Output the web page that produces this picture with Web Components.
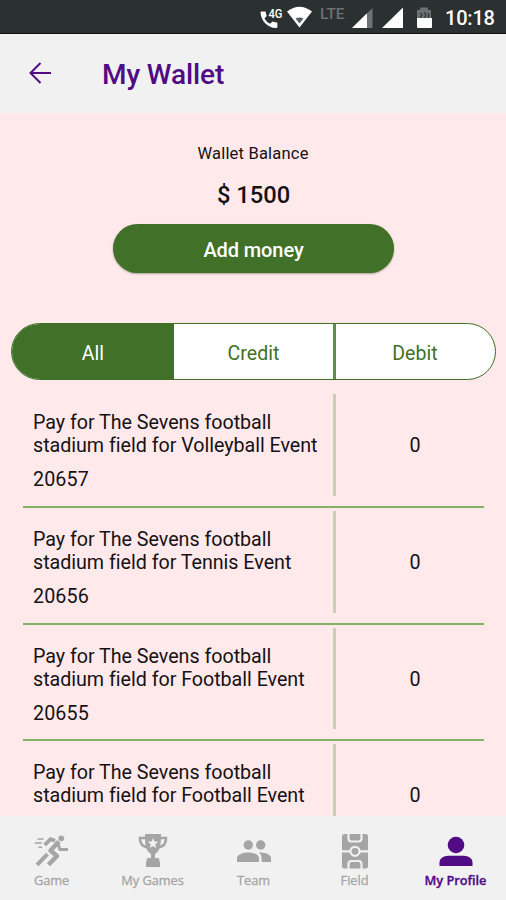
<!DOCTYPE html>
<html lang="en">
<head>
<meta charset="utf-8">
<title>My Wallet</title>
<style>
  html, body {
    margin: 0;
    height: 100%;
    overflow: hidden;
  }

  body {
    font-family: Roboto, sans-serif;
    --green: #417028;
    --purple: #500b85;
    --pink: #ffe9eb;
    --bar: #f1f1f1;
    --grey: #a5a5a5;
  }
</style>
</head>
<body>
<wallet-app></wallet-app>

<script>
function define(name, html, setup) {
  const template = document.createElement('template');
  template.innerHTML = html;
  customElements.define(name, class extends HTMLElement {
    constructor() {
      super();
      this.attachShadow({ mode: 'open' });
      this.shadowRoot.appendChild(template.content.cloneNode(true));
    }

    connectedCallback() {
      if (setup) setup(this, this.shadowRoot);
    }
  });
}

define('status-bar', `
  <style>
    :host {
      display: flex;
      align-items: flex-start;
      justify-content: flex-end;
      box-sizing: border-box;
      height: 34px;
      padding-right: 11px;
      background: #2b3031;
      border-bottom: 1px solid #111;
      color: #fff;
    }
    svg { display: block; flex: none; }
    .lte {
      width: 25px;
      margin: 5px 7px 0 8px;
      font-size: 15.500px;
      line-height: 18px;
      font-weight: 500;
      letter-spacing: -0.1px;
      color: #6c7172;
    }
    .time {
      width: 50px;
      margin-left: 13px;
      font-size: 20px;
      line-height: 36px;
      font-weight: 500;
      letter-spacing: -0.2px;
      white-space: nowrap;
    }
  </style>
  <svg width="27" height="34" viewBox="0 0 27 34">
    <path fill="#fff" d="M1.500 11.500h4l1.200 4.500-2.200 2.200c1.300 2.600 3 4.200 5.600 5.600l2.300-2.200 5 1.200v3.600c0 1-.6 1.600-1.600 1.600C8 28 1 21 .5 12.500c0-.6.400-1 1-1z"/>
    <text x="8.500" y="18" font-size="12.500" font-weight="500" fill="#fff" textLength="14" lengthAdjust="spacingAndGlyphs">4G</text>
  </svg>
  <svg width="25" height="34" viewBox="0 0 25 34">
    <path fill="#fff" d="M0 11.500Q12.500 2 25 11.500L12.500 27.500z"/>
    <path fill="#5b5f60" d="M8.500 18.500q4-2 8 0l-4 5z"/>
  </svg>
  <div class="lte">LTE</div>
  <svg width="21" height="34" viewBox="0 0 21 34">
    <path fill="#6c7172" d="M0 28L20.500 8v20z"/>
    <path fill="#fff" d="M0 28L15 13.300V28z"/>
  </svg>
  <svg width="30" height="34" viewBox="0 0 30 34">
    <path fill="#fff" d="M9 28L30 7.500V28z"/>
  </svg>
  <svg width="29" height="34" viewBox="0 0 29 34">
    <path fill="#6c7172" d="M14 10h3V7.500h8V10h3v9H14z"/>
    <path fill="#fff" d="M14 18h15v9q0 1-1 1H15q-1 0-1-1z"/>
    <path fill="none" stroke="#34393a" stroke-width="1.300" d="M17 13l2 2-2 3M21 12l2 3-2 3M25 13l1 2-1 3"/>
  </svg>
  <div class="time">10:18</div>
`);

define('app-header', `
  <style>
    :host {
      display: flex;
      align-items: center;
      box-sizing: border-box;
      height: 79px;
      padding: 2px 0 0 28px;
      background: var(--bar);
      color: var(--purple);
    }
    svg { display: block; margin: -3px 50px 0 0; }
    h1 {
      margin: 0;
      font-size: 28px;
      line-height: 34px;
      font-weight: 500;
      letter-spacing: -0.1px;
    }
  </style>
  <svg width="24" height="24" viewBox="0 0 24 24" fill="none" stroke="currentColor" stroke-width="2">
    <path d="M23 12H2.500M12.500 2L2.500 12l10 10"/>
  </svg>
  <h1><slot></slot></h1>
`);

define('wallet-balance', `
  <style>
    :host {
      display: flex;
      flex-direction: column;
      align-items: center;
      padding-top: 31px;
      color: #161214;
    }
    .label { font-size: 16.500px; line-height: 20px; letter-spacing: 0.200px; }
    .amount { margin-top: 17px; padding-left: 1px; font-size: 23.700px; line-height: 28px; font-weight: 500; }
    button {
      width: 281px;
      height: 49px;
      margin: 15px 0 0 1px;
      padding: 2px 0 0;
      border: 0;
      border-radius: 25px;
      background: var(--green);
      box-shadow: 0 1px 2px rgba(0, 40, 0, .35);
      color: #fff;
      font: 500 20px/24px Roboto, sans-serif;
      letter-spacing: -0.100px;
    }
  </style>
  <div class="label">Wallet Balance</div>
  <div class="amount"><slot></slot></div>
  <button>Add money</button>
`);

define('filter-tabs', `
  <style>
    :host {
      display: flex;
      box-sizing: border-box;
      width: 485px;
      height: 57px;
      margin: 50px 0 0 11px;
      border: 1.500px solid var(--green);
      border-radius: 29px;
      background: #fff;
      overflow: hidden;
    }
  </style>
  <slot></slot>
`);

define('filter-tab', `
  <style>
    :host {
      display: flex;
      flex: 1;
      align-items: center;
      justify-content: center;
      box-sizing: border-box;
      padding: 3px 0 0;
      color: var(--green);
      font-size: 19.500px;
      letter-spacing: 0.05px;
    }
    :host(:last-child) { flex: 0 0 162px; padding-right: 1px; border-left: 3px solid #628b53; }
    :host([active]) { flex: 0 0 162px; background: var(--green); color: #fff; }
  </style>
  <slot></slot>
`);

define('transaction-row', `
  <style>
    :host {
      display: flex;
      box-sizing: border-box;
      height: 116.700px;
      margin: 0 22px 0 23px;
      padding: 3px 0 10px;
      border-bottom: 2px solid #85b166;
      color: #161214;
      font-size: 19.700px;
      line-height: 23px;
    }
    .info {
      flex: none;
      box-sizing: border-box;
      width: 313px;
      padding: 17px 0 0 10px;
      border-right: 3px solid #c9cfb6;
    }
    .title { white-space: pre-line; letter-spacing: -0.030px; }
    .id { margin-top: 11px; letter-spacing: 0.100px; }
    .amount {
      display: flex;
      flex: 1;
      align-items: center;
      justify-content: center;
      padding: 1px 0 0 10px;
    }
  </style>
  <div class="info">
    <div class="title"><slot></slot></div>
    <div class="id"></div>
  </div>
  <div class="amount"></div>
`, (host, root) => {
  root.querySelector('.id').textContent = host.getAttribute('number');
  root.querySelector('.amount').textContent = host.getAttribute('amount');
});

define('nav-item', `
  <style>
    :host {
      display: flex;
      flex: 1;
      flex-direction: column;
      align-items: center;
      color: var(--grey);
      font: 400 12.800px/18px "Open Sans", "Noto Sans", sans-serif;
      letter-spacing: -0.050px;
      -webkit-text-stroke: 0.300px currentColor;
    }
    :host([active]) { color: var(--purple); font-weight: 600; }
    .icon { display: flex; height: 38px; }
    .label { white-space: nowrap; }
  </style>
  <div class="icon"><slot name="icon"></slot></div>
  <div class="label"><slot></slot></div>
`);

define('bottom-nav', `
  <style>
    :host {
      display: flex;
      flex: none;
      box-sizing: border-box;
      height: 84px;
      padding: 17px 0 0 1px;
      background: var(--bar);
    }
  </style>
  <nav-item>Game
    <svg slot="icon" width="36" height="38" viewBox="0 0 36 38" fill="none" stroke="currentColor">
      <circle cx="27.300" cy="5.300" r="2.900" fill="currentColor" stroke="none"/>
      <path stroke-width="3.800" d="M10.800 12L16.500 6.200l4.700 1.600"/>
      <path stroke-width="4.500" stroke-linejoin="round" d="M25 8.500l-8.500 9 6.500 5.500-8.500 8.800"/>
      <path stroke-width="3" d="M24 11l2 5.500h8"/>
      <path stroke-width="4" d="M13.500 21.200L3 31.800"/>
      <path stroke-width="1.400" d="M3.500 6h6M.8 10h7M4.500 14.300h3.500"/>
    </svg>
  </nav-item>
  <nav-item>My Games
    <svg slot="icon" width="32" height="38" viewBox="0 0 32 38">
      <path fill="none" stroke="currentColor" stroke-width="2.600" d="M9 5H3c0 6 2 8.500 8.500 9.500M23 5h6c0 6-2 8.500-8.500 9.500"/>
      <path fill="currentColor" d="M8 1h16v2c0 9-1 15-6 18v4h2.500q2 0 2 2v2H23v5H9v-5h.5v-2q0-2 2-2H14v-4C9 18 8 12 8 3z"/>
      <path fill="#f1f1f1" d="M16 5l1.400 3.500 3.800.3-2.900 2.500.9 3.700-3.200-2-3.200 2 .9-3.700-2.900-2.500 3.800-.3z"/>
    </svg>
  </nav-item>
  <nav-item>Team
    <svg slot="icon" width="36" height="38" viewBox="0 0 36 38" fill="currentColor">
      <circle cx="12.300" cy="12" r="4.700"/>
      <circle cx="24.700" cy="12" r="4.700"/>
      <path d="M1 29v-4c0-3.500 6-5.500 11.300-5.500S23 21.500 23 25v4zM23.500 19.600c5.500-.2 11.500 1.900 11.500 5.400v4h-9.500v-4c0-2.200-.8-3.800-2.500-5.200z"/>
    </svg>
  </nav-item>
  <nav-item>Field
    <svg slot="icon" width="28" height="38" viewBox="0 0 28 38">
      <rect x="1" y="1" width="26" height="34.500" rx="2.500" fill="currentColor"/>
      <g fill="none" stroke="#f1f1f1" stroke-width="2.200">
        <path d="M7.500 .5v5q0 3 3 3h7q3 0 3-3V.5M7.500 36v-5q0-3 3-3h7q3 0 3 3v5M1 18.300h8.500M18.500 18.300H27"/>
        <circle cx="14" cy="18.300" r="4.500"/>
      </g>
    </svg>
  </nav-item>
  <nav-item active>My Profile
    <svg slot="icon" width="34" height="38" viewBox="0 0 34 38" fill="currentColor">
      <circle cx="17" cy="12" r="8.300"/>
      <path d="M.5 33v-3.500C.5 25 5 23 9 22.800h16c4 .2 8.500 2.200 8.500 6.700V33z"/>
    </svg>
  </nav-item>
`);

define('wallet-app', `
  <style>
    :host {
      display: flex;
      flex-direction: column;
      width: 506px;
      height: 900px;
      background: var(--pink);
    }
    main { flex: 1; min-height: 0; overflow: hidden; }
    .list { padding-top: 11.400px; }
  </style>
  <status-bar></status-bar>
  <app-header>My Wallet</app-header>
  <main>
    <wallet-balance>$ 1500</wallet-balance>
    <filter-tabs>
      <filter-tab active>All</filter-tab>
      <filter-tab>Credit</filter-tab>
      <filter-tab>Debit</filter-tab>
    </filter-tabs>
    <div class="list">
      <transaction-row number="20657" amount="0">Pay for The Sevens football
stadium field for Volleyball Event</transaction-row>
      <transaction-row number="20656" amount="0">Pay for The Sevens football
stadium field for Tennis Event</transaction-row>
      <transaction-row number="20655" amount="0">Pay for The Sevens football
stadium field for Football Event</transaction-row>
      <transaction-row amount="0">Pay for The Sevens football
stadium field for Football Event</transaction-row>
    </div>
  </main>
  <bottom-nav></bottom-nav>
`);
</script>
</body>
</html>
